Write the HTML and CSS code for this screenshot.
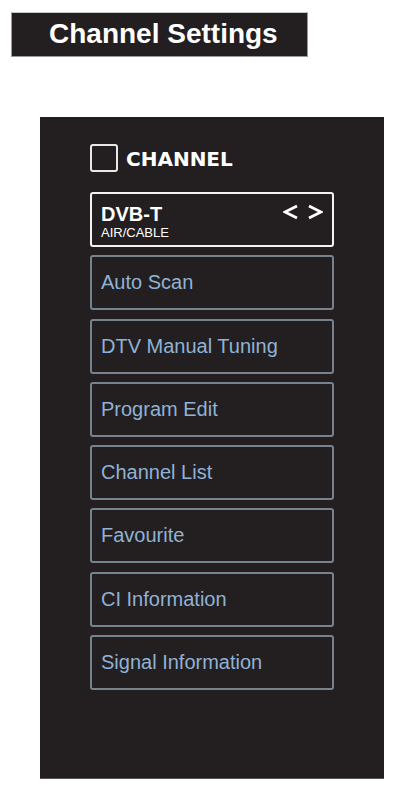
FILE: index.html
```html
<!DOCTYPE html>
<html>
<head>
<meta charset="utf-8">
<link rel="stylesheet" href="styles.css">
</head>
<body>
<div class="title-bar">Channel Settings</div>
<div class="panel">
  <div class="panel-head">
    <span class="check"></span>
    <span class="head-label">CHANNEL</span>
  </div>
  <div class="menu">
    <div class="item active">
      <div class="active-row">
        <span class="active-title">DVB-T</span>
        <svg class="arrows" width="40" height="16" viewBox="0 0 40 16">
          <polyline points="14,2 2,8 14,14" fill="none" stroke="#ffffff" stroke-width="2.8" stroke-linejoin="miter"/>
          <polyline points="26,2 38,8 26,14" fill="none" stroke="#ffffff" stroke-width="2.8" stroke-linejoin="miter"/>
        </svg>
      </div>
      <div class="active-sub">AIR/CABLE</div>
    </div>
    <div class="item">Auto Scan</div>
    <div class="item">DTV Manual Tuning</div>
    <div class="item">Program Edit</div>
    <div class="item">Channel List</div>
    <div class="item">Favourite</div>
    <div class="item">CI Information</div>
    <div class="item">Signal Information</div>
  </div>
</div>
</body>
</html>
```

FILE: styles.css
```css
* { box-sizing: border-box; }
html, body {
  margin: 0;
  padding: 0;
  background: #ffffff;
}
body {
  width: 405px;
  height: 800px;
  padding-top: 12px;
  font-family: "Liberation Sans", Arial, sans-serif;
}
.title-bar {
  margin-left: 11px;
  width: 297px;
  height: 45px;
  background: #231f20;
  border: 1px solid #9a9a9a;
  border-top-color: #c8c8c8;
  color: #ffffff;
  font-weight: bold;
  font-size: 28px;
  line-height: 41px;
  padding-left: 37px;
  white-space: nowrap;
}
.panel {
  margin-top: 60px;
  margin-left: 40px;
  width: 344px;
  height: 662px;
  background: #231f20;
  border-bottom: 1px solid #555;
  padding-top: 27px;
  padding-left: 50px;
}
.panel-head {
  display: flex;
  align-items: center;
  gap: 8px;
  height: 28px;
}
.check {
  width: 28px;
  height: 28px;
  border: 2px solid #e8e8e8;
  border-radius: 3px;
}
.head-label {
  font-family: "DejaVu Sans", sans-serif;
  font-weight: bold;
  font-size: 20px;
  color: #ffffff;
  padding-top: 2px;
}
.menu {
  margin-top: 20px;
  display: flex;
  flex-direction: column;
  gap: 8.3px;
  width: 244px;
}
.item {
  height: 55px;
  border: 2px solid #76838d;
  border-radius: 3px;
  display: flex;
  align-items: center;
  padding-left: 9px;
  color: #8fb2d6;
  font-size: 20px;
  white-space: nowrap;
}
.item.active {
  display: block;
  border-color: #f2f2f2;
  padding-top: 9.5px;
  padding-right: 9px;
  color: #ffffff;
}
.active-row {
  display: flex;
  justify-content: space-between;
  align-items: flex-start;
}
.active-title {
  font-weight: bold;
  font-size: 20px;
  line-height: 20px;
}
.arrows {
  margin-top: 0.5px;
  display: block;
}
.active-sub {
  margin-top: 2.4px;
  font-size: 13px;
  line-height: 14px;
}
```
